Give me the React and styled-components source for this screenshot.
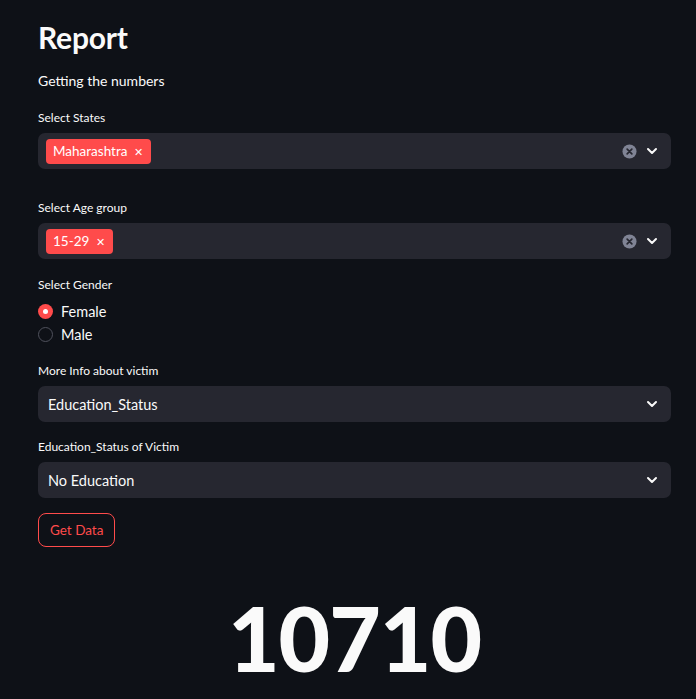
import React from 'react'
import styled, { createGlobalStyle } from 'styled-components'

const GlobalStyle = createGlobalStyle`
  html, body {
    margin: 0;
    padding: 0;
    background: #0e1117;
  }
  body {
    font-family: Lato, 'Liberation Sans', sans-serif;
    color: #fafafa;
  }
`

const Page = styled.div`
  width: 696px;
  min-height: 699px;
  background: #0e1117;
  padding: 17px 25px 0 38px;
  box-sizing: border-box;
  overflow: hidden;
`

const Title = styled.h1`
  margin: 0;
  font-size: 30px;
  line-height: 40px;
  font-weight: 700;
  letter-spacing: -0.2px;
`

const Subtitle = styled.p`
  margin: 14px 0 0;
  font-size: 14px;
  line-height: 20px;
`

const Widget = styled.div`
  display: flex;
  flex-direction: column;
  margin-top: ${p => p.$top}px;
`

const Label = styled.label`
  font-size: 12px;
  line-height: 16px;
  height: 16px;
  margin-bottom: ${p => p.$gap ?? 7}px;
`

const Box = styled.div`
  display: flex;
  align-items: center;
  height: 36px;
  background: #262730;
  border-radius: 7px;
  padding: 0 12px 0 8px;
  box-sizing: border-box;
`

const Tags = styled.div`
  flex: 1;
  display: flex;
  gap: 6px;
`

const Tag = styled.span`
  display: inline-flex;
  align-items: center;
  height: 25px;
  padding: 0 8px 0 7px;
  background: #ff4b4b;
  border-radius: 4px;
  font-size: 13.5px;
  color: #fff;
`

const TagClose = styled.span`
  margin-left: 7px;
  font-size: 11px;
  line-height: 1;
`

const Value = styled.span`
  flex: 1;
  padding-left: 2px;
  font-size: 14.5px;
`

const Icons = styled.div`
  display: flex;
  align-items: center;
  gap: 8px;
`

const RadioGroup = styled.div`
  display: flex;
  flex-direction: column;
`

const RadioRow = styled.div`
  display: flex;
  align-items: center;
  height: 23px;
  font-size: 14.5px;
`

const RadioDot = styled.span`
  width: 15px;
  height: 15px;
  border-radius: 50%;
  box-sizing: border-box;
  margin-right: 8px;
  display: inline-flex;
  align-items: center;
  justify-content: center;
  background: ${p => (p.$on ? '#ff4b4b' : 'transparent')};
  border: ${p => (p.$on ? 'none' : '1px solid #4f515c')};
  &::after {
    content: '';
    display: ${p => (p.$on ? 'block' : 'none')};
    width: 5px;
    height: 5px;
    border-radius: 50%;
    background: #fff;
  }
`

const Button = styled.button`
  align-self: flex-start;
  height: 34px;
  padding: 0 11px;
  background: transparent;
  border: 1px solid #ff4b4b;
  border-radius: 8px;
  color: #ff4b4b;
  font-family: inherit;
  font-size: 13.5px;
`

const BigNumber = styled.div`
  margin-top: 38px;
  text-align: center;
  font-size: 89px;
  font-weight: 900;
  line-height: 106px;
  letter-spacing: -1px;
`

const ClearIcon = () => (
  <svg width="15" height="15" viewBox="0 0 16 16">
    <circle cx="8" cy="8" r="7.5" fill="#808495" />
    <path d="M5.5 5.5l5 5M10.5 5.5l-5 5" stroke="#262730" strokeWidth="1.8" strokeLinecap="round" />
  </svg>
)

const Chevron = () => (
  <svg width="14" height="14" viewBox="0 0 14 14">
    <path d="M3 5l4 4 4-4" fill="none" stroke="#fafafa" strokeWidth="2" strokeLinecap="round" strokeLinejoin="round" />
  </svg>
)

const MultiSelect = ({ label, tags, top }) => (
  <Widget $top={top}>
    <Label>{label}</Label>
    <Box>
      <Tags>
        {tags.map(t => (
          <Tag key={t}>
            {t}
            <TagClose>✕</TagClose>
          </Tag>
        ))}
      </Tags>
      <Icons>
        <ClearIcon />
        <Chevron />
      </Icons>
    </Box>
  </Widget>
)

const Select = ({ label, value, top }) => (
  <Widget $top={top}>
    <Label>{label}</Label>
    <Box>
      <Value>{value}</Value>
      <Chevron />
    </Box>
  </Widget>
)

export default function App() {
  return (
    <>
      <GlobalStyle />
      <Page>
        <Title>Report</Title>
        <Subtitle>Getting the numbers</Subtitle>
        <MultiSelect label="Select States" tags={['Maharashtra']} top={19} />
        <MultiSelect label="Select Age group" tags={['15-29']} top={31} />
        <Widget $top={18}>
          <Label $gap={7}>Select Gender</Label>
          <RadioGroup>
            <RadioRow>
              <RadioDot $on />
              Female
            </RadioRow>
            <RadioRow>
              <RadioDot />
              Male
            </RadioRow>
          </RadioGroup>
        </Widget>
        <Select label="More Info about victim" value="Education_Status" top={17} />
        <Select label="Education_Status of Victim" value="No Education" top={17} />
        <Widget $top={15}>
          <Button>Get Data</Button>
        </Widget>
        <BigNumber>10710</BigNumber>
      </Page>
    </>
  )
}
